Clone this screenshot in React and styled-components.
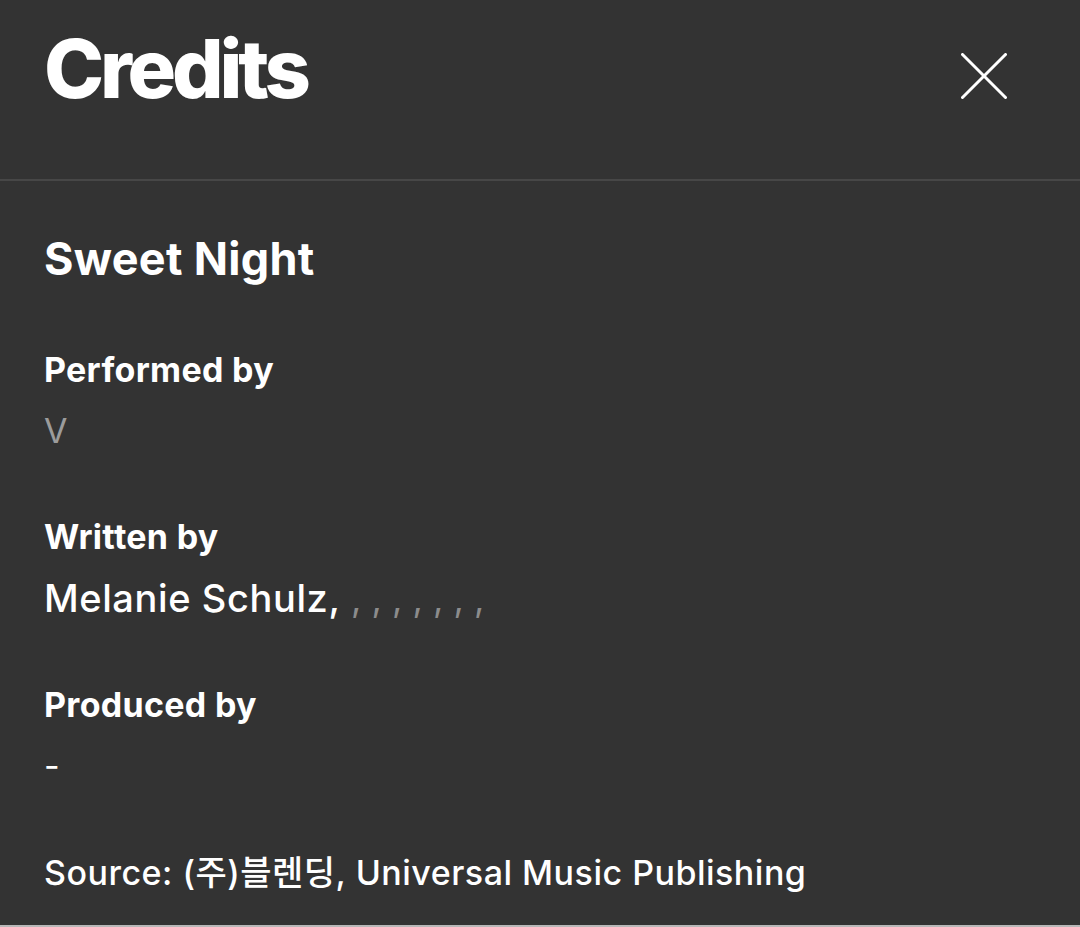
import React from 'react';
import styled, { createGlobalStyle } from 'styled-components';

const GlobalStyle = createGlobalStyle`
  html, body {
    margin: 0;
    padding: 0;
    background: #333333;
  }
  body {
    font-family: Inter, "Noto Sans", "Noto Sans CJK KR", sans-serif;
    color: #ffffff;
    -webkit-font-smoothing: antialiased;
  }
`;

const Panel = styled.div`
  min-height: 927px;
  box-sizing: border-box;
  background: #333333;
  border-bottom: 2px solid #b8b8b8;
  display: flex;
  flex-direction: column;
`;

const Header = styled.header`
  height: 181px;
  box-sizing: border-box;
  padding: 21px 73px 0 44px;
  border-bottom: 2px solid #474747;
  display: flex;
  justify-content: space-between;
  align-items: flex-start;
`;

const Title = styled.h1`
  margin: 0;
  font-size: 81px;
  line-height: 96px;
  font-weight: 800;
  letter-spacing: -4.2px;
  color: #ffffff;
`;

const CloseButton = styled.button`
  margin-top: 32px;
  width: 46px;
  height: 46px;
  padding: 0;
  border: none;
  background: transparent;
  color: #ffffff;
  cursor: pointer;
  display: flex;

  svg {
    width: 46px;
    height: 46px;
  }
`;

const Body = styled.div`
  padding: 51px 44px 0;
  display: flex;
  flex-direction: column;
`;

const TrackTitle = styled.h2`
  margin: 0;
  font-size: 45px;
  line-height: 54px;
  font-weight: 700;
  letter-spacing: 0.3px;
`;

const Section = styled.section`
  margin-top: 64px;
`;

const Label = styled.h3`
  margin: 0;
  font-size: 34px;
  line-height: 40px;
  font-weight: 700;
  letter-spacing: 0.3px;
`;

const Value = styled.div`
  margin-top: 19px;
  font-size: ${(p) => (p.$large ? '38px' : '34px')};
  line-height: 44px;
  font-weight: ${(p) => (p.$large ? 500 : 400)};
  letter-spacing: ${(p) => (p.$large ? '0.6px' : '0')};
  color: ${(p) => (p.$muted ? '#9c9c9c' : '#ffffff')};
`;

const Muted = styled.span`
  color: #8c8c8c;
  font-size: 36px;
  font-weight: 400;
  letter-spacing: 0;
`;

const Source = styled.p`
  margin: 65px 0 0;
  font-size: 34px;
  line-height: 40px;
  font-weight: 500;
  letter-spacing: 0.5px;
`;

const CloseIcon = () => (
  <svg viewBox="0 0 46 46" fill="none" stroke="currentColor" strokeWidth="3" strokeLinecap="round">
    <line x1="1.5" y1="1.5" x2="44.5" y2="44.5" />
    <line x1="44.5" y1="1.5" x2="1.5" y2="44.5" />
  </svg>
);

export default function App() {
  return (
    <>
      <GlobalStyle />
      <Panel>
        <Header>
          <Title>Credits</Title>
          <CloseButton aria-label="Close">
            <CloseIcon />
          </CloseButton>
        </Header>
        <Body>
          <TrackTitle>Sweet Night</TrackTitle>

          <Section>
            <Label>Performed by</Label>
            <Value $muted>V</Value>
          </Section>

          <Section>
            <Label>Written by</Label>
            <Value $large>
              Melanie Schulz, <Muted>, , , , , , ,</Muted>
            </Value>
          </Section>

          <Section>
            <Label>Produced by</Label>
            <Value>-</Value>
          </Section>

          <Source>Source: (주)블렌딩, Universal Music Publishing</Source>
        </Body>
      </Panel>
    </>
  );
}
